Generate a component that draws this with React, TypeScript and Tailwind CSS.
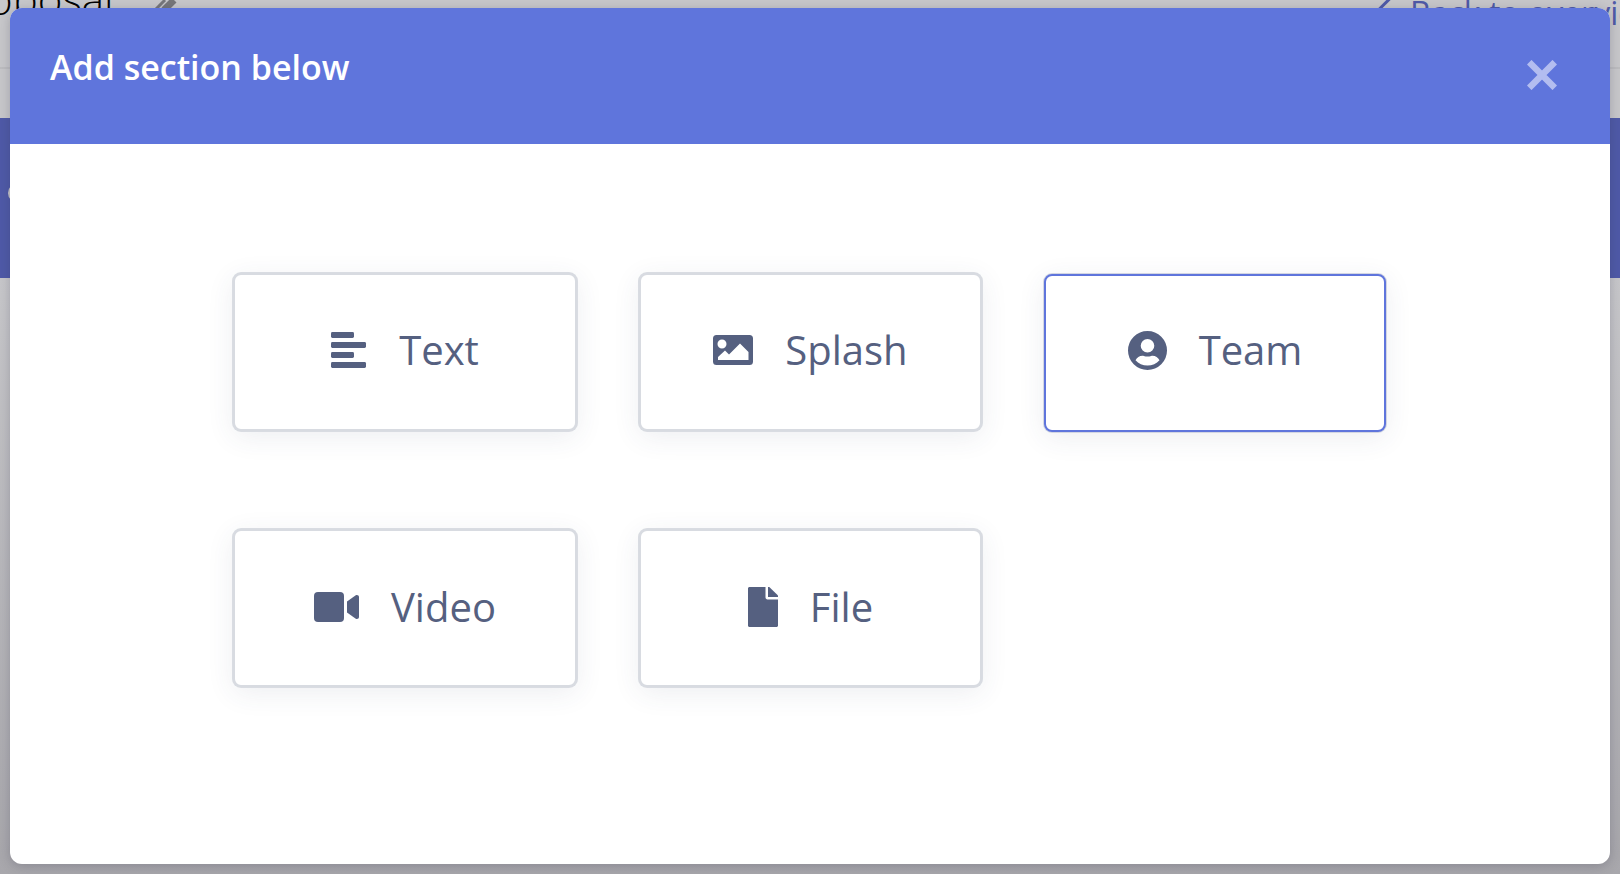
import { ReactNode } from 'react';

const iconColor = '#556080';

function TextIcon() {
  return (
    <svg width="36" height="36" viewBox="0 0 36 36" fill={iconColor}>
      <rect x="0" y="0" width="23" height="6" rx="1.4" />
      <rect x="0" y="10" width="35" height="6" rx="1.4" />
      <rect x="0" y="20" width="23" height="6" rx="1.4" />
      <rect x="0" y="30" width="35" height="6" rx="1.4" />
    </svg>
  );
}

function ImageIcon() {
  return (
    <svg width="40" height="30" viewBox="0 0 40 30" fill={iconColor}>
      <path d="M3.500 0h33A3.500 3.500 0 0 1 40 3.500v23a3.500 3.500 0 0 1-3.500 3.500h-33A3.500 3.500 0 0 1 0 26.500v-23A3.500 3.500 0 0 1 3.500 0zM9 4.500a4.500 4.500 0 1 0 0 9 4.500 4.500 0 0 0 0-9zM5 25h30.500V17L27 8.500 16 19.500l-4-4-7 6.500z" fillRule="evenodd" />
    </svg>
  );
}

function UserIcon() {
  return (
    <svg width="39" height="39" viewBox="0 0 39 39" fill={iconColor}>
      <path fillRule="evenodd" d="M19.500 0a19.500 19.500 0 1 1 0 39 19.500 19.500 0 0 1 0-39zM19.500 8a6.800 6.800 0 1 0 0 13.600 6.800 6.800 0 0 0 0-13.600zM19.500 34.500c4.700 0 9-2 12-5.300-1.300-2.700-4-4.500-7-4.500-.5 0-1 .1-1.300.2-1.200.4-2.400.6-3.700.6s-2.500-.2-3.700-.6c-.3-.1-.8-.2-1.300-.2-3 0-5.700 1.800-7 4.500 3 3.300 7.300 5.300 12 5.300z" />
    </svg>
  );
}

function VideoIcon() {
  return (
    <svg width="45" height="30" viewBox="0 0 45 30" fill={iconColor}>
      <rect x="0" y="0" width="30" height="30" rx="4" />
      <path d="M33 9.500 41.800 3.300c1.300-.9 3.200 0 3.200 1.600v20.200c0 1.600-1.900 2.500-3.200 1.600L33 20.500z" />
    </svg>
  );
}

function FileIcon() {
  return (
    <svg width="30" height="40" viewBox="0 0 30 40" fill={iconColor}>
      <path d="M17.500 0v10.600c0 1 .9 1.900 1.900 1.900H30v26c0 .8-.7 1.500-1.500 1.500h-27C.7 40 0 39.300 0 38.500v-37C0 .7.700 0 1.500 0z" />
      <path d="M20 0h.7c.4 0 .8.200 1.100.4l7.700 7.700c.3.300.5.700.5 1.100v.8h-10z" />
    </svg>
  );
}

function SectionCard({ icon, label, active, lower }: { icon: ReactNode; label: string; active?: boolean; lower?: boolean }) {
  return (
    <button
      className={`flex items-center justify-center gap-[32px] rounded-[8px] border-2 bg-white text-[40px] text-[#556080] ${
        active
          ? 'ml-px mt-[2px] h-[158px] w-[342px] border-[#5f75dc] pb-[6px] shadow-[0_0_0_1px_#d3d6e2,0_6px_28px_rgba(60,70,100,0.09)]'
          : 'm-px h-[158px] border-[#d8dbe1] shadow-[0_0_0_1px_#d9dce2,0_6px_28px_rgba(60,70,100,0.09)]'
      } ${lower ? 'pb-[2px]' : ''} ${!active && !lower ? 'pb-[4px]' : ''}`}
    >
      {icon}
      <span className="leading-none">{label}</span>
    </button>
  );
}

export default function App() {
  return (
    <div className="relative h-[874px] w-[1620px] overflow-hidden bg-[#c8c8cb] font-['Open_Sans',sans-serif]">
      {/* page behind the overlay */}
      <div className="h-[69px] border-b-2 border-[#bdbdc0]">
        <span className="absolute -left-[12px] -top-[31px] whitespace-nowrap text-[42px] font-light leading-[60px] text-black">oposal</span>
        <svg className="absolute left-[150px] top-0" width="36" height="10" viewBox="0 0 36 10">
          <path d="M5 10 15 0" stroke="#77777a" strokeWidth="3" />
          <path d="M14 10 24 0" stroke="#77777a" strokeWidth="7" />
        </svg>
        <span className="absolute left-[1410px] -top-[17px] whitespace-nowrap text-[32px] leading-[60px] text-[#4f5aa8]">Back to overview</span>
        <span className="absolute left-[1382px] -top-[6px] h-[22px] w-[3px] rotate-45 bg-[#4f5aa8]" />
      </div>
      <div className="mt-[49px] h-[160px] bg-[#4f5aa8]" />
      <span className="absolute left-[8px] top-[183px] h-5 w-5 rounded-full bg-[#c8c8cb]" />
      <div className="absolute inset-x-0 bottom-0 h-[596px] bg-gradient-to-b from-[#c8c8cb] to-[#a8a7ac]" />

      <div className="absolute left-[10px] top-2 flex h-[856px] w-[1600px] flex-col overflow-hidden rounded-[12px] bg-white shadow-[0_2px_12px_rgba(40,40,60,0.25)]">
        <div className="flex h-[136px] shrink-0 items-start justify-between bg-[#5f75dc] pl-10 pr-[53px]">
          <h2 className="mt-[34px] text-[34px] font-semibold leading-[50px] text-white">Add section below</h2>
          <svg className="mt-[52px]" width="30" height="30" viewBox="0 0 30 30">
            <path d="M4.500 4.500 25.500 25.500M25.500 4.500 4.500 25.500" stroke="#b3bdf0" strokeWidth="6.500" strokeLinecap="square" />
          </svg>
        </div>
        <div className="grid grid-cols-[346px_345px_345px] gap-x-[60px] gap-y-[96px] pl-[222px] pt-[128px]">
          <SectionCard icon={<TextIcon />} label="Text" />
          <SectionCard icon={<ImageIcon />} label="Splash" />
          <SectionCard icon={<UserIcon />} label="Team" active />
          <SectionCard icon={<VideoIcon />} label="Video" lower />
          <SectionCard icon={<FileIcon />} label="File" lower />
        </div>
      </div>
    </div>
  );
}
